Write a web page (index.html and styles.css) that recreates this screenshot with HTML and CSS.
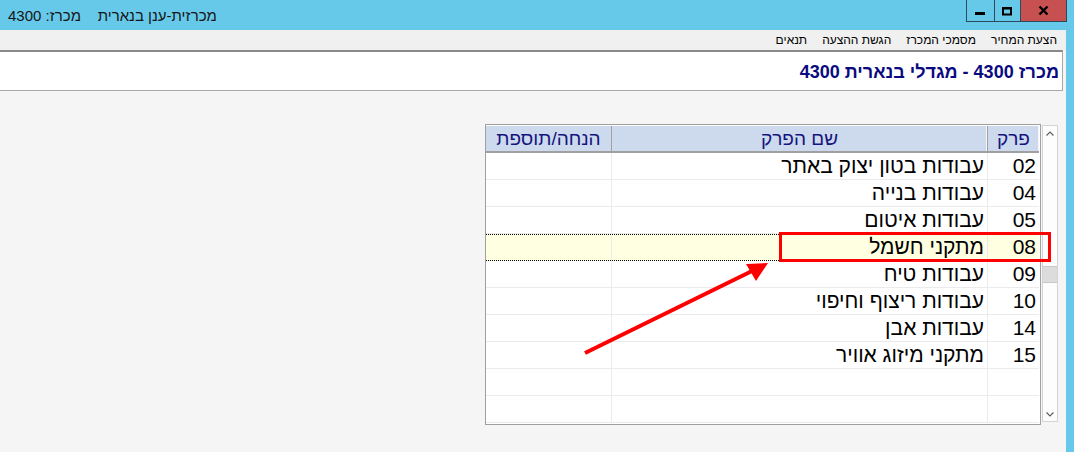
FILE: index.html
```html
<!DOCTYPE html>
<html lang="he">
<head>
<meta charset="utf-8">
<title>מכרזית</title>
<link rel="stylesheet" href="styles.css">
</head>
<body>
<div class="window">
  <div class="titlebar">
    <div class="title" dir="rtl">מכרזית-ענן בנארית&nbsp;&nbsp;&nbsp; מכרז: 4300</div>
    <div class="winbtns">
      <div class="wb min"><svg width="27" height="21" viewBox="0 0 27 21"><rect x="8" y="12" width="10" height="3" fill="#000"/></svg></div>
      <div class="wb max"><svg width="25" height="21" viewBox="0 0 25 21"><rect x="8" y="8.5" width="8" height="6" fill="none" stroke="#000" stroke-width="2"/><rect x="7" y="7" width="10" height="2" fill="#000"/></svg></div>
      <div class="wb close"><svg width="45" height="21" viewBox="0 0 45 21"><path d="M18.5 6.5 L26.5 14.5 M26.5 6.5 L18.5 14.5" stroke="#000" stroke-width="2.4"/></svg></div>
    </div>
  </div>
  <div class="frame">
    <div class="menubar" dir="rtl">
      <span>הצעת המחיר</span>
      <span>מסמכי המכרז</span>
      <span>הגשת ההצעה</span>
      <span>תנאים</span>
    </div>
    <div class="headpanel" dir="rtl">
      <h1>מכרז 4300 - מגדלי בנארית 4300</h1>
    </div>
    <div class="content" dir="rtl">
      <div class="scrollbar">
        <div class="sb-btn"><svg width="14" height="14" viewBox="0 0 14 14"><path d="M3.5 8.5 L7 5 L10.5 8.5" fill="none" stroke="#606060" stroke-width="1.2"/></svg></div>
        <div class="sb-track"><div class="sb-thumb"></div></div>
        <div class="sb-btn"><svg width="14" height="14" viewBox="0 0 14 14"><path d="M3.5 5.5 L7 9 L10.5 5.5" fill="none" stroke="#606060" stroke-width="1.2"/></svg></div>
      </div>
      <div class="grid">
        <div class="hdr">
          <div class="c1">פרק</div>
          <div class="c2">שם הפרק</div>
          <div class="c3">הנחה/תוספת</div>
        </div>
        <div class="row"><div class="c1">02</div><div class="c2">עבודות בטון יצוק באתר</div><div class="c3"></div></div>
        <div class="row"><div class="c1">04</div><div class="c2">עבודות בנייה</div><div class="c3"></div></div>
        <div class="row"><div class="c1">05</div><div class="c2">עבודות איטום</div><div class="c3"></div></div>
        <div class="row sel"><div class="c1">08</div><div class="c2">מתקני חשמל</div><div class="c3"></div></div>
        <div class="row"><div class="c1">09</div><div class="c2">עבודות טיח</div><div class="c3"></div></div>
        <div class="row"><div class="c1">10</div><div class="c2">עבודות ריצוף וחיפוי</div><div class="c3"></div></div>
        <div class="row"><div class="c1">14</div><div class="c2">עבודות אבן</div><div class="c3"></div></div>
        <div class="row"><div class="c1">15</div><div class="c2">מתקני מיזוג אוויר</div><div class="c3"></div></div>
        <div class="row"><div class="c1"></div><div class="c2"></div><div class="c3"></div></div>
        <div class="row"><div class="c1"></div><div class="c2"></div><div class="c3"></div></div>
      </div>
    </div>
  </div>
</div>
<svg class="annot" width="1074" height="452" viewBox="0 0 1074 452">
  <rect x="780.5" y="233.5" width="269" height="27" fill="none" stroke="#ff0000" stroke-width="3"/>
  <line x1="585" y1="353" x2="752" y2="271" stroke="#ff0000" stroke-width="4"/>
  <polygon points="768,263 746,264 756,281" fill="#ff0000"/>
</svg>
</body>
</html>
```
FILE: styles.css
```css
html, body {
  margin: 0;
  padding: 0;
}
body {
  width: 1074px;
  height: 452px;
  overflow: hidden;
  position: relative;
  background: #f5f5f5;
  font-family: "Liberation Sans", "DejaVu Sans", sans-serif;
  color: #000;
}
.titlebar {
  height: 30px;
  background: #66c9ea;
  display: flex;
  justify-content: space-between;
  align-items: flex-start;
}
.title {
  padding-left: 8px;
  padding-top: 2px;
  line-height: 28px;
  font-size: 15px;
  color: #161616;
}
.winbtns {
  display: flex;
  margin-right: 7px;
  border: 1px solid #2c4b58;
  border-top: none;
  height: 21px;
}
.wb {
  height: 21px;
  display: flex;
}
.wb.min {
  width: 27px;
  border-right: 1px solid #2c4b58;
}
.wb.max {
  width: 25px;
  border-right: 1px solid #2c4b58;
}
.wb.close {
  width: 45px;
  background: #c75050;
}
.frame {
  border-right: 8px solid #66c9ea;
  height: 422px;
  box-sizing: border-box;
}
.menubar {
  height: 20px;
  background: #f0f0f0;
  display: flex;
  align-items: center;
  gap: 15px;
  padding-right: 9px;
  font-size: 12px;
  color: #000;
}
.headpanel {
  height: 38px;
  border-top: 2px solid #8a8a8a;
  border-bottom: 1px solid #a8a8a8;
  border-right: 1px solid #a8a8a8;
  margin-right: 3px;
  background: #fff;
  display: flex;
  align-items: center;
  padding-right: 3px;
}
.headpanel h1 {
  margin: 0;
  padding-top: 2px;
  font-size: 18px;
  font-weight: bold;
  color: #0a0a80;
}
.content {
  padding-top: 33px;
  padding-right: 8px;
  display: flex;
  align-items: flex-start;
  gap: 1px;
}
.scrollbar {
  width: 16px;
  height: 297px;
  margin-top: 1px;
  box-sizing: border-box;
  border: 1px solid #d4d4d4;
  background: #fdfdfd;
  display: flex;
  flex-direction: column;
}
.sb-btn {
  height: 15px;
  display: flex;
  justify-content: center;
  align-items: center;
}
.sb-track {
  flex: 1;
  position: relative;
}
.sb-thumb {
  margin-top: 125px;
  height: 17px;
  background: #dcdcdc;
  border-top: 1px solid #c8c8c8;
  border-bottom: 1px solid #c8c8c8;
  box-sizing: border-box;
}
.grid {
  border: 1px solid #a0a0a0;
  padding: 1px 1px 1px 0;
  background: #fff;
}
.hdr {
  display: flex;
  height: 27px;
  box-sizing: border-box;
  border-bottom: 2px solid #a0a0a0;
  background: #cdd9ed;
  color: #14147e;
  font-size: 19px;
  line-height: 25px;
}
.hdr > div {
  text-align: center;
}
.hdr .c1, .hdr .c2 {
  border-left: 1px solid #a0a0a0;
  box-shadow: inset -1px 0 0 #f4f6fb;
}
.c1 { width: 51px; }
.c2 { width: 375px; }
.c3 { width: 125px; }
.row {
  display: flex;
  height: 27px;
  box-sizing: border-box;
  border-bottom: 1px solid #ebebeb;
  font-size: 21px;
  line-height: 25px;
}
.row .c1 {
  border-left: 1px solid #ebebeb;
  text-align: right;
  padding-right: 3px;
  box-sizing: border-box;
  width: 52px;
}
.row .c2 {
  border-left: 1px solid #ebebeb;
  text-align: right;
  padding-right: 3px;
  box-sizing: border-box;
  width: 376px;
}
.row.sel {
  background: #ffffe1;
  border-top: 1px dotted #000;
  border-bottom: 1px dotted #000;
  line-height: 24px;
}
.hdr .c1 { width: 52px; box-sizing: border-box; }
.hdr .c2 { width: 376px; box-sizing: border-box; }
.annot {
  position: absolute;
  left: 0;
  top: 0;
  pointer-events: none;
}
```
